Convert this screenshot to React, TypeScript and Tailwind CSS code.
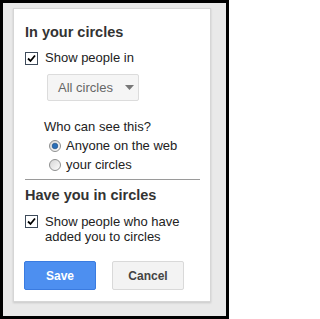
import React from "react";

function Check() {
  return (
    <div className="w-[13px] h-[13px] border border-[#3d4a5a] bg-white flex items-center justify-center shrink-0">
      <svg width="9" height="9" viewBox="0 0 9 9">
        <path d="M1 4.5 L3.5 7 L8 1.5" fill="none" stroke="#000" strokeWidth="1.8" />
      </svg>
    </div>
  );
}

function Radio({ on }: { on?: boolean }) {
  return (
    <svg width="12" height="12" viewBox="0 0 12 12" className="shrink-0">
      <defs>
        <linearGradient id={on ? "rg1" : "rg2"} x1="0" y1="0" x2="1" y2="1">
          <stop offset="0" stopColor="#d4d4d4" />
          <stop offset="1" stopColor="#ffffff" />
        </linearGradient>
      </defs>
      <circle cx="6" cy="6" r="5.5" fill={`url(#${on ? "rg1" : "rg2"})`} stroke="#8e8f8f" strokeWidth="1" />
      {on && <circle cx="6" cy="6" r="2.8" fill="#2a6fb8" stroke="#17467a" strokeWidth="0.6" />}
    </svg>
  );
}

export default function App() {
  return (
    <div className="w-[229px] h-[319px] bg-black p-[3px]" style={{ fontFamily: '"Liberation Sans", Arial, sans-serif' }}>
      <div className="w-[223px] h-[313px] bg-[#e9e9e9] pl-[10px] pt-[5px]">
        <div className="w-[198px] h-[294px] bg-white border border-[#d6d6d6] shadow-[0_1px_2px_rgba(0,0,0,0.15)] pl-[11px] pr-[11px] pt-[15px]">
          <div className="text-[14.5px] leading-[17px] font-bold text-[#333]">In your circles</div>
          <div className="flex items-center gap-[7px] mt-[9px] h-[16px]">
            <Check />
            <span className="text-[13px] leading-[16px] text-[#222]">Show people in</span>
          </div>
          <div className="ml-[22px] mt-[8px] w-[92px] h-[27px] bg-[#f5f5f5] border border-[#dcdcdc] rounded-[2px] flex items-center pl-[10px] gap-[12px]">
            <span className="text-[13px] text-[#666]">All circles</span>
            <svg width="9" height="5" viewBox="0 0 9 5">
              <path d="M0 0 L9 0 L4.5 5 Z" fill="#777" />
            </svg>
          </div>
          <div className="ml-[19px] mt-[18px] text-[13px] leading-[16px] text-[#222]">Who can see this?</div>
          <div className="ml-[24px] mt-[1px] flex items-center gap-[5px] h-[19px]">
            <Radio on />
            <span className="text-[13px] leading-[16px] text-[#222]">Anyone on the web</span>
          </div>
          <div className="ml-[24px] flex items-center gap-[5px] h-[19px]">
            <Radio />
            <span className="text-[13px] leading-[16px] text-[#222]">your circles</span>
          </div>
          <div className="mt-[5px] h-px bg-[#9a9a9a] w-[175px]" />
          <div className="mt-[7px] text-[14.5px] leading-[17px] font-bold text-[#333]">Have you in circles</div>
          <div className="flex items-start gap-[7px] mt-[10px]">
            <div className="mt-[1px]"><Check /></div>
            <span className="text-[13px] leading-[15px] text-[#222]">
              Show people who have
              <br />
              added you to circles
            </span>
          </div>
          <div className="flex gap-[16px] mt-[17px] ml-[-1px]">
            <div className="w-[72px] h-[29px] bg-[#4d8ff0] border border-[#3a7be0] rounded-[2px] flex items-center justify-center text-white text-[12px] font-bold">
              Save
            </div>
            <div className="w-[72px] h-[29px] bg-[#f3f3f3] border border-[#d9d9d9] rounded-[2px] flex items-center justify-center text-[#444] text-[12px] font-bold">
              Cancel
            </div>
          </div>
        </div>
      </div>
    </div>
  );
}
